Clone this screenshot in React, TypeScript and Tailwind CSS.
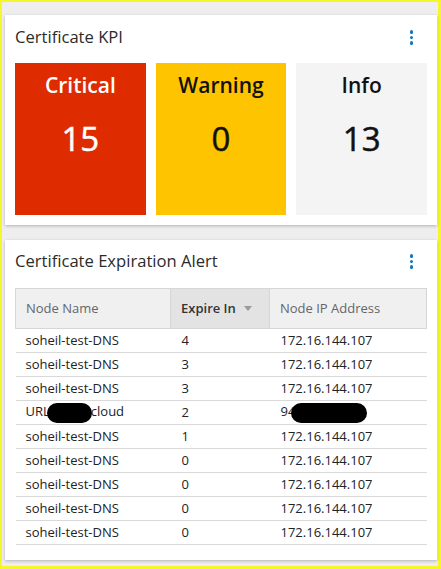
const rows = [
  { name: "soheil-test-DNS", days: "4", ip: "172.16.144.107" },
  { name: "soheil-test-DNS", days: "3", ip: "172.16.144.107" },
  { name: "soheil-test-DNS", days: "3", ip: "172.16.144.107" },
  { name: "redacted", days: "2", ip: "redacted" },
  { name: "soheil-test-DNS", days: "1", ip: "172.16.144.107" },
  { name: "soheil-test-DNS", days: "0", ip: "172.16.144.107" },
  { name: "soheil-test-DNS", days: "0", ip: "172.16.144.107" },
  { name: "soheil-test-DNS", days: "0", ip: "172.16.144.107" },
  { name: "soheil-test-DNS", days: "0", ip: "172.16.144.107" },
];

function Kebab() {
  return (
    <div className="flex flex-col items-center gap-[2px] pt-[1px]">
      <span className="size-[3.5px] rounded-full bg-[#0b78b9]" />
      <span className="size-[3.5px] rounded-full bg-[#0b78b9]" />
      <span className="size-[3.5px] rounded-full bg-[#0b78b9]" />
    </div>
  );
}

function CardHeader({ title }: { title: string }) {
  return (
    <div className="flex items-center justify-between pr-[14px]">
      <h2 className="text-[16.6px] leading-[22px] text-[#2b2b2b]">{title}</h2>
      <Kebab />
    </div>
  );
}

function Tile({ label, value, cls }: { label: string; value: string; cls: string }) {
  return (
    <div className={`flex h-[152px] flex-1 flex-col items-center pt-[7px] ${cls}`}>
      <div className="text-[21px] font-semibold leading-[30px]">{label}</div>
      <div className="mt-[19px] text-[33px] leading-[40px] [font-weight:500] [-webkit-text-stroke:0.5px_currentColor]">
        {value}
      </div>
    </div>
  );
}

function Blob({ w }: { w: string }) {
  return <span className={`inline-block h-[20px] rounded-full bg-black align-middle ${w}`} />;
}

export default function App() {
  return (
    <div
      className="flex h-[569px] w-[441px] flex-col gap-[15px] border-t-2 border-r-[3px] border-b-[3px] border-l-2 border-[#f6f62a] bg-[#eeeeee] pt-[13px] pl-[3px] pr-[2px]"
      style={{ fontFamily: '"Open Sans", "Noto Sans", sans-serif' }}
    >
      {/* KPI card */}
      <div className="flex h-[210px] w-[432px] flex-col bg-white px-[10px] pt-[11px] shadow-[0_1px_3px_rgba(0,0,0,0.25)]">
        <CardHeader title="Certificate KPI" />
        <div className="mt-[15px] flex gap-[10px]">
          <Tile label="Critical" value="15" cls="bg-[#de2c00] text-white" />
          <Tile label="Warning" value="0" cls="bg-[#ffc400] text-[#111]" />
          <Tile label="Info" value="13" cls="bg-[#f4f4f4] text-[#111]" />
        </div>
      </div>

      {/* expiration table card */}
      <div className="flex h-[320px] w-[432px] flex-col bg-white px-[10px] pt-[10px] shadow-[0_1px_3px_rgba(0,0,0,0.25)]">
        <CardHeader title="Certificate Expiration Alert" />
        <table className="mt-[16px] w-[412px] border-collapse text-[13px] text-[#222]">
          <thead>
            <tr className="h-[40px] bg-[#f0f0f0] text-left">
              <th className="w-[155px] border border-[#d6d6d6] pl-[10px] font-normal text-[#666]">Node Name</th>
              <th className="w-[99px] border border-[#d6d6d6] bg-[#e3e3e3] pl-[10px] font-semibold text-[#333]">
                <span className="flex items-center gap-[8px]">
                  Expire In
                  <svg width="8" height="5" viewBox="0 0 8 5">
                    <path d="M0 0h8L4 5z" fill="#9a9a9a" />
                  </svg>
                </span>
              </th>
              <th className="border border-[#d6d6d6] pl-[10px] font-normal text-[#666]">Node IP Address</th>
            </tr>
          </thead>
          <tbody>
            {rows.map((r, i) => (
              <tr key={i} className="h-[24px] border-b border-[#d9d9d9]">
                <td className="pl-[10px]">
                  {r.name === "redacted" ? (
                    <span className="whitespace-nowrap">
                      URL<span className="-ml-[3px]"><Blob w="w-[45px]" /></span>
                      <span className="-ml-[1px]">cloud</span>
                    </span>
                  ) : (
                    r.name
                  )}
                </td>
                <td className="pl-[11px]">{r.days}</td>
                <td className="pl-[11px]">
                  {r.ip === "redacted" ? (
                    <span className="whitespace-nowrap">
                      94<span className="-ml-[4px]"><Blob w="w-[76px]" /></span>
                    </span>
                  ) : (
                    r.ip
                  )}
                </td>
              </tr>
            ))}
          </tbody>
        </table>
      </div>
    </div>
  );
}
